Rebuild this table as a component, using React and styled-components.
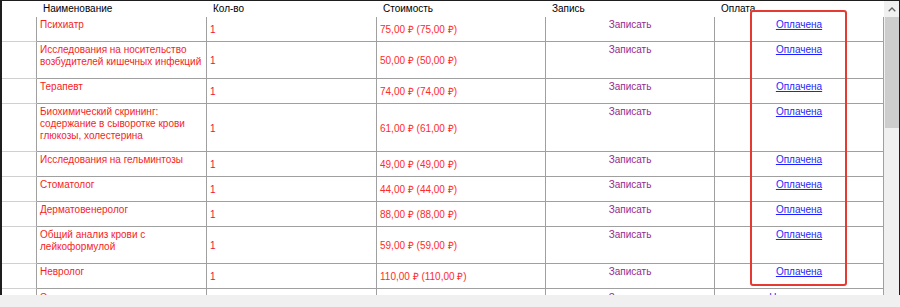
import React from 'react';
import styled, { createGlobalStyle } from 'styled-components';

const GlobalStyle = createGlobalStyle`
  body {
    margin: 0;
    background: #f0f0f0;
    font-family: "Liberation Sans", Arial, sans-serif;
    font-size: 10px;
  }
  * { box-sizing: border-box; }
`;

const COLUMNS = '35px 170px 170px 169px 169px 169px';
const ROW_HEIGHTS = { 1: 25, 2: 37, 3: 48 };

const Window = styled.div`
  position: relative;
  width: 900px;
  height: 307px;
  overflow: hidden;
  background: #f0f0f0;
`;

const GridFrame = styled.div`
  display: flex;
  height: 295px;
  background: #fff;
  border-top: 1px solid #1e1e1e;
  border-left: 2px solid #1e1e1e;
  border-right: 1px solid #1e1e1e;
`;

const Table = styled.div`
  width: 882px;
  overflow: hidden;
  display: flex;
  flex-direction: column;
`;

const HeaderRow = styled.div`
  display: grid;
  grid-template-columns: ${COLUMNS};
  height: 16px;
  flex-shrink: 0;
`;

const HeaderCell = styled.div`
  padding-left: 6px;
  line-height: 16px;
  color: #000;
  white-space: nowrap;
`;

const Row = styled.div`
  display: grid;
  grid-template-columns: ${COLUMNS};
  height: ${(p) => ROW_HEIGHTS[p.lines]}px;
  flex-shrink: 0;
`;

const RowHeader = styled.div`
  border-right: 1px solid #a0a0a0;
  border-bottom: 1px solid #d0d0d0;
`;

const Cell = styled.div`
  display: flex;
  flex-direction: column;
  align-items: ${(p) => (p.center ? 'center' : 'flex-start')};
  justify-content: ${(p) => (p.middle ? 'center' : 'flex-start')};
  padding: ${(p) => (p.partial ? '3px' : '2px')} 3px 0;
  line-height: 12px;
  white-space: nowrap;
  border-right: 1px solid #a0a0a0;
  border-bottom: 1px solid #a0a0a0;
  color: ${(p) => p.color || '#000'};
`;

const Link = styled.span`
  color: #1f1fff;
  text-decoration: underline;
  cursor: pointer;
`;

const ScrollBar = styled.div`
  width: 15px;
  display: flex;
  flex-direction: column;
  background: #f0f0f0;
`;

const ScrollButton = styled.div`
  height: 16px;
  display: flex;
  align-items: center;
  justify-content: center;
`;

const ScrollThumb = styled.div`
  height: 111px;
  margin-left: 1px;
  background: #cdcdcd;
`;

const Highlight = styled.div`
  position: absolute;
  left: 750px;
  top: 10px;
  width: 97px;
  height: 276px;
  border: 2px solid #e53a31;
  border-radius: 3px;
  pointer-events: none;
`;

const rows = [
  { name: ['Психиатр'], price: '75,00 ₽ (75,00 ₽)' },
  {
    name: ['Исследования на носительство', 'возбудителей кишечных инфекций'],
    price: '50,00 ₽ (50,00 ₽)',
  },
  { name: ['Терапевт'], price: '74,00 ₽ (74,00 ₽)' },
  {
    name: [
      'Биохимический скрининг:',
      'содержание в сыворотке крови',
      'глюкозы, холестерина',
    ],
    price: '61,00 ₽ (61,00 ₽)',
  },
  { name: ['Исследования на гельминтозы'], price: '49,00 ₽ (49,00 ₽)' },
  { name: ['Стоматолог'], price: '44,00 ₽ (44,00 ₽)' },
  { name: ['Дерматовенеролог'], price: '88,00 ₽ (88,00 ₽)' },
  { name: ['Общий анализ крови с', 'лейкоформулой'], price: '59,00 ₽ (59,00 ₽)' },
  { name: ['Невролог'], price: '110,00 ₽ (110,00 ₽)' },
  // only the top edge of this row is still in view
  { name: ['Эндокринолог'], partial: true },
];

const headers = ['', 'Наименование', 'Кол-во', 'Стоимость', 'Запись', 'Оплата'];

export default function App() {
  return (
    <>
      <GlobalStyle />
      <Window>
        <GridFrame>
          <Table>
            <HeaderRow>
              {headers.map((h, i) => (
                <HeaderCell key={i}>{h}</HeaderCell>
              ))}
            </HeaderRow>
            {rows.map((row, i) => (
              <Row key={i} lines={row.name.length}>
                <RowHeader />
                <Cell partial={row.partial} color="#f41e1e">
                  {row.name.map((line) => (
                    <span key={line}>{line}</span>
                  ))}
                </Cell>
                <Cell middle color="#e8123a">
                  {!row.partial && '1'}
                </Cell>
                <Cell middle color="#ff2a2a">
                  {row.price}
                </Cell>
                <Cell center partial={row.partial} color="#962a8e">
                  Записать
                </Cell>
                <Cell center partial={row.partial}>
                  <Link>{row.partial ? 'Не оплачена' : 'Оплачена'}</Link>
                </Cell>
              </Row>
            ))}
          </Table>
          <ScrollBar>
            <ScrollButton>
              <svg width="8" height="5" viewBox="0 0 8 5">
                <polyline
                  points="0.7,4.3 4,1 7.3,4.3"
                  fill="none"
                  stroke="#606060"
                  strokeWidth="1.3"
                />
              </svg>
            </ScrollButton>
            <ScrollThumb />
          </ScrollBar>
        </GridFrame>
        <Highlight />
      </Window>
    </>
  );
}
